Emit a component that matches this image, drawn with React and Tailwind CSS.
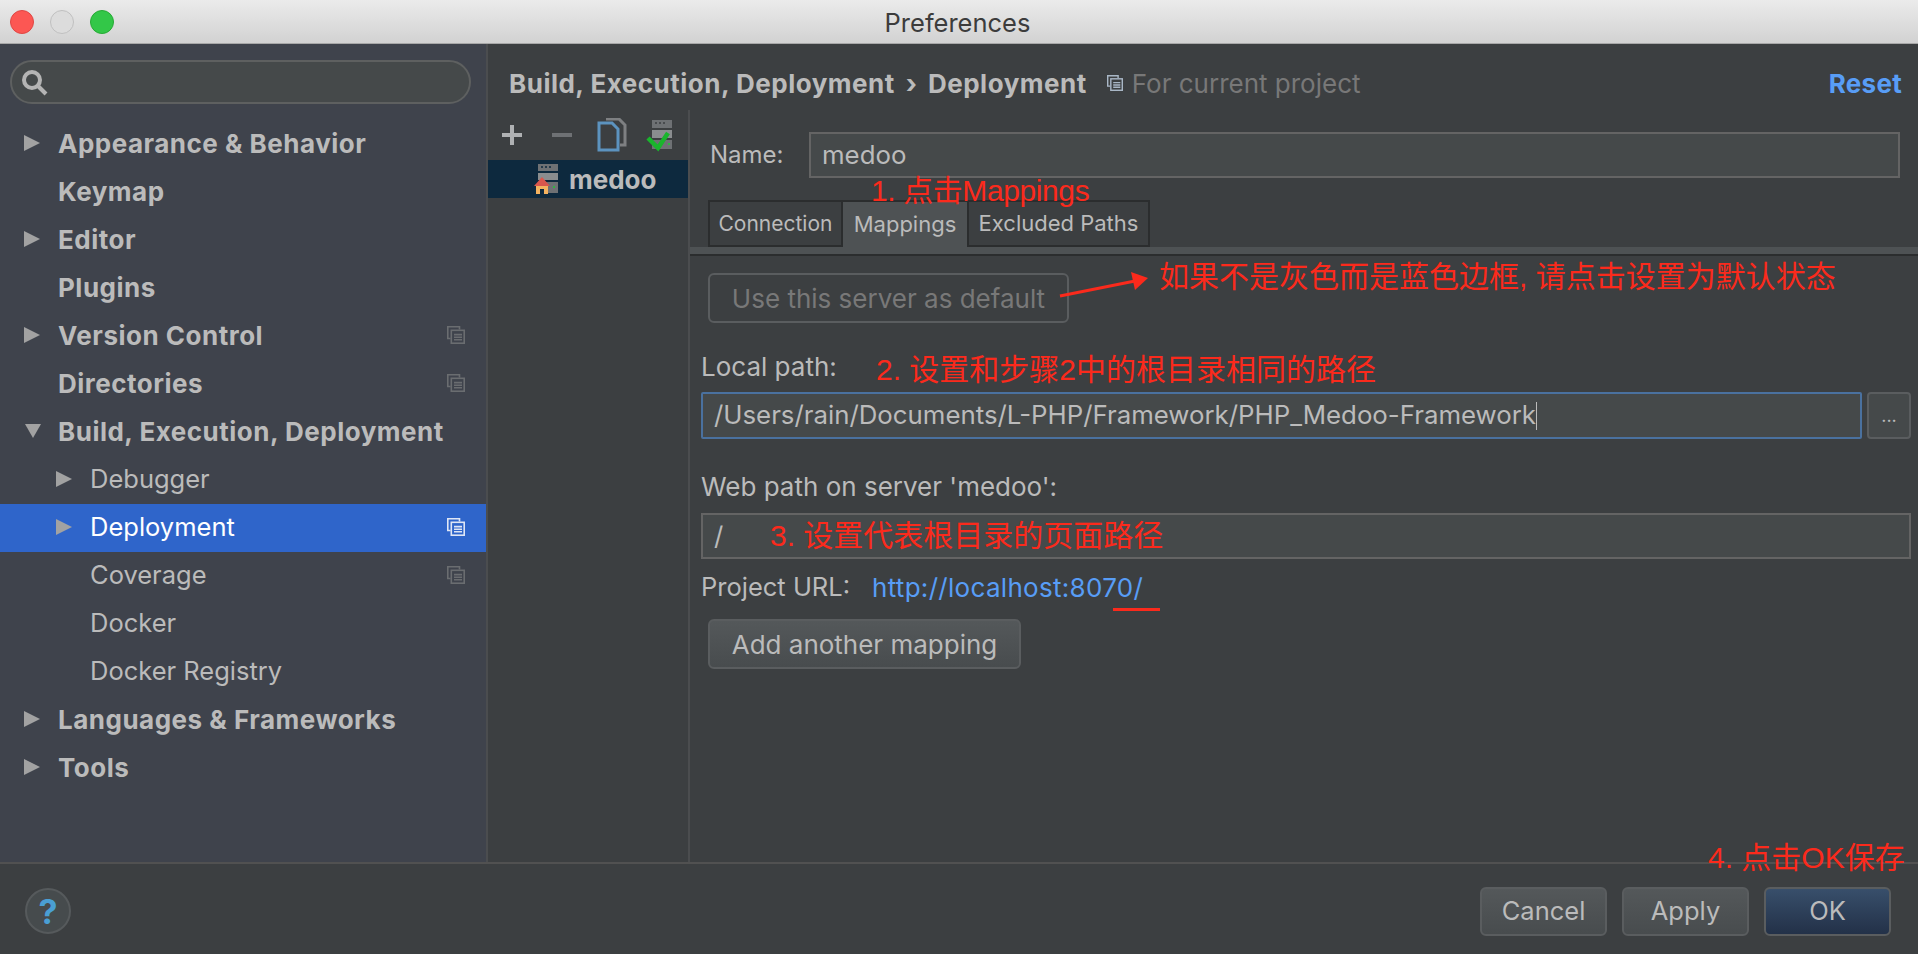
import React from "react";

const sidebarItems = [
  { label: "Appearance & Behavior", bold: true, arrow: "right" },
  { label: "Keymap", bold: true },
  { label: "Editor", bold: true, arrow: "right" },
  { label: "Plugins", bold: true },
  { label: "Version Control", bold: true, arrow: "right", copy: true },
  { label: "Directories", bold: true, copy: true },
  { label: "Build, Execution, Deployment", bold: true, arrow: "down" },
  { label: "Debugger", child: true, arrow: "right" },
  { label: "Deployment", child: true, arrow: "right", copy: true, selected: true },
  { label: "Coverage", child: true, copy: true },
  { label: "Docker", child: true },
  { label: "Docker Registry", child: true },
  { label: "Languages & Frameworks", bold: true, arrow: "right" },
  { label: "Tools", bold: true, arrow: "right" },
];

// the little "project level" overlapping squares
const ScopeIcon = ({ color = "#6a6d70", className = "", size = 18 }) => (
  <svg width={size} height={size} viewBox="0 0 18 18" fill="none" stroke={color} strokeWidth="1.6" className={className}>
    <path d="M12.5 3.5V0.8H0.8V12.5H3.5" />
    <rect x="4.3" y="4.3" width="12.9" height="12.9" />
    <path d="M7 8.6H15M7 11.2H15M7 13.8H15" />
  </svg>
);

const Arrow = ({ dir }) =>
  dir === "down" ? (
    <svg width="18" height="16" viewBox="0 0 18 16" className="shrink-0"><path d="M1 1H17L9 15Z" fill="#a2a2a2" /></svg>
  ) : (
    <svg width="16" height="18" viewBox="0 0 16 18" className="shrink-0"><path d="M0 1L16 9L0 17Z" fill="#a2a2a2" /></svg>
  );

const SidebarRow = ({ item }) => (
  <div className={`relative flex items-center h-12 pb-[2px] ${item.selected ? "bg-[#2f65ca] text-white" : "text-[#bbbbbb]"} ${item.bold ? "font-bold text-[26px] tracking-[0.5px]" : "text-[25.5px]"} ${item.child ? "pl-[56px]" : "pl-6"}`}>
    <div className="w-[34px] shrink-0">{item.arrow && <Arrow dir={item.arrow} />}</div>
    <span className="whitespace-nowrap">{item.label}</span>
    {item.copy && <ScopeIcon color={item.selected ? "#dfe6f5" : "#6a6d70"} className="ml-auto mr-[21px]" />}
  </div>
);

const Field = ({ children, className = "", border = "border-[#646464]" }) => (
  <div className={`flex items-center h-[46px] bg-[#45494a] border-2 ${border} pl-[11px] text-[25.8px] text-[#bbbbbb] ${className}`}>
    {children}
  </div>
);

const Tab = ({ children, active, className = "" }) => (
  <div className={`flex items-center justify-center h-[47px] text-[#bbbbbb] border-[#2b2d2e] border-t-2 ${active ? "bg-[#4e5254]" : "border-x-2 border-b-2"} ${className}`}>
    {children}
  </div>
);

const DialogButton = ({ children, primary }) => (
  <button className={`h-[49px] w-[127px] rounded-[6px] border-2 border-[#5a5d5f] text-[25.5px] text-[#bbbbbb] ${primary ? "bg-gradient-to-b from-[#384f6b] to-[#233148]" : "bg-gradient-to-b from-[#54585a] to-[#484c4e]"}`}>
    {children}
  </button>
);

const Note = ({ className, children }) => (
  <div className={`absolute whitespace-nowrap text-[#fb2a1c] text-[30px] leading-none font-['Liberation_Sans','Noto_Sans_CJK_SC',sans-serif] ${className}`}>{children}</div>
);

export default function App() {
  return (
    <div className="relative flex flex-col w-[1918px] h-[954px] overflow-hidden bg-[#3c3f41] font-['Inter','Noto_Sans_CJK_SC',sans-serif]">
      {/* title bar */}
      <div className="relative flex items-center justify-center h-[44px] pt-1 shrink-0 bg-gradient-to-b from-[#ebebeb] to-[#d2d2d2] border-b border-[#a8a8a8]">
        <div className="absolute left-[10px] top-[10px] flex gap-4">
          <div className="size-6 rounded-full bg-[#fc5753] border border-[#df4744]" />
          <div className="size-6 rounded-full bg-[#dcdcdc] border border-[#c0c0c0]" />
          <div className="size-6 rounded-full bg-[#33c748] border border-[#27aa35]" />
        </div>
        <span className="text-[25.5px] text-[#3c3c3c] mr-[3px]">Preferences</span>
      </div>

      <div className="flex flex-1 min-h-0">
        {/* settings tree */}
        <div className="w-[486px] shrink-0 bg-[#3f434c] border-r-2 border-[#4b4d4f] box-content">
          <div className="flex items-center h-[44px] ml-[10px] mr-[15px] mt-[16px] mb-[16px] rounded-full border-2 border-[#5e6060] bg-[#45494a] pl-2">
            <svg width="28" height="28" viewBox="0 0 28 28" fill="none" stroke="#b4b4b4" strokeWidth="4">
              <circle cx="12" cy="12" r="8" />
              <path d="M18 18L26 26" />
            </svg>
          </div>
          {sidebarItems.map((item) => (
            <SidebarRow key={item.label} item={item} />
          ))}
        </div>

        <div className="flex flex-col flex-1 min-w-0">
          {/* breadcrumb */}
          <div className="flex items-center h-[66px] pt-[12px] shrink-0 pl-[21px] pr-4 text-[26px]">
            <span className="font-bold tracking-[0.5px] text-[#bbbbbb] whitespace-nowrap">Build, Execution, Deployment</span>
            <span className="mx-[11px] font-bold text-[#bbbbbb]">›</span>
            <span className="font-bold tracking-[0.5px] text-[#bbbbbb]">Deployment</span>
            <ScopeIcon color="#a9b7c6" size={16} className="ml-5 mr-[9px]" />
            <span className="text-[#787878] whitespace-nowrap">For current project</span>
            <span className="ml-auto font-bold tracking-[0.3px] text-[#589df6]">Reset</span>
          </div>

          <div className="flex flex-1 min-h-0">
            {/* server list */}
            <div className="w-[200px] shrink-0 border-r-2 border-[#4b4d4f] box-content">
              <div className="flex items-center h-[50px] pl-[12px]">
                <svg width="24" height="24" viewBox="0 0 24 24" className="mr-[26px]"><path d="M12 2V22M2 12H22" stroke="#afb1b3" strokeWidth="4" /></svg>
                <svg width="24" height="24" viewBox="0 0 24 24" className="mr-[23px]"><path d="M2 12H22" stroke="#6e7174" strokeWidth="4" /></svg>
                <svg width="30" height="34" viewBox="0 0 30 34" fill="none" className="mr-[17px]">
                  <path d="M9 1H22L28 7V27H23" stroke="#7e8082" strokeWidth="3" />
                  <path d="M2 5H15L21 11V32H2Z" stroke="#5c93bf" strokeWidth="3" fill="#3c3f41" />
                </svg>
                <svg width="30" height="34" viewBox="0 0 30 34">
                  <rect x="8" y="2" width="20" height="8" fill="#6e7174" />
                  <rect x="8" y="12" width="20" height="8" fill="#8a8d8f" />
                  <rect x="8" y="22" width="20" height="9" fill="#6e7174" />
                  <path d="M11 5H13M15 5H17M19 5H21" stroke="#3c3f41" strokeWidth="1.5" />
                  <rect x="24" y="25" width="2" height="2" fill="#2fb344" />
                  <path d="M4 20L14 30L24 15" stroke="#19b52c" strokeWidth="4.5" fill="none" />
                </svg>
              </div>
              <div className="flex items-center h-[38px] bg-[#0d293e] pl-[46px]">
                <svg width="35" height="30" viewBox="0 0 35 30" className="shrink-0">
                  <rect x="4" y="0" width="20" height="7" fill="#6e7174" />
                  <rect x="4" y="9" width="20" height="7" fill="#8a8d8f" />
                  <rect x="4" y="18" width="20" height="11" fill="#6e7174" />
                  <path d="M7 3H9M11 3H13M15 3H17" stroke="#0d293e" strokeWidth="1.5" />
                  <path d="M0 22L8 13L16 22Z" fill="#d9574d" />
                  <rect x="2" y="22" width="12" height="8" fill="#f4b25f" />
                  <rect x="6" y="25" width="4" height="5" fill="#0d293e" />
                  <rect x="19" y="22" width="2" height="2" fill="#2fb344" />
                </svg>
                <span className="text-[26px] font-bold text-[#bbbbbb]">medoo</span>
              </div>
            </div>

            {/* mapping form */}
            <div className="flex-1 min-w-0 pt-[22px]">
              <div className="flex items-center pl-[20px] pr-[18px]">
                <span className="w-[99px] shrink-0 text-[24px] text-[#bbbbbb]">Name:</span>
                <Field className="flex-1">medoo</Field>
              </div>

              <div className="flex pl-[18px] mt-[22px]">
                <Tab className="w-[135px] text-[21px]">Connection</Tab>
                <Tab active className="w-[124px] text-[22px]">Mappings</Tab>
                <Tab className="w-[183px] text-[22px]">Excluded Paths</Tab>
              </div>
              <div className="h-[9px] bg-[#4e5254] border-b-2 border-[#2b2d2e]" />

              <div className="pl-[18px] pt-[17px]">
                <div className="flex items-center justify-center w-[361px] h-[50px] rounded-[6px] border-2 border-[#5a5d5f] text-[26px] text-[#787878]">
                  Use this server as default
                </div>
              </div>

              <div className="pl-[11px] pr-[7px]">
                <div className="mt-[30px] text-[26px] leading-[28px] text-[#bbbbbb]">Local path:</div>
                <div className="flex gap-[5px] mt-[11px]">
                  <Field className="flex-1 h-[47px] rounded-[2px]" border="border-[#4a719f]">
                    <span className="whitespace-nowrap">/Users/rain/Documents/L-PHP/Framework/PHP_Medoo-Framework</span>
                    <span className="w-px h-7 bg-[#bbbbbb]" />
                  </Field>
                  <div className="flex items-center justify-center w-[44px] h-[47px] rounded-[4px] border-2 border-[#5a5d5f] bg-[#45494a] text-[18px] text-[#bbbbbb]">...</div>
                </div>
                <div className="mt-[34px] text-[26px] leading-[28px] text-[#bbbbbb]">Web path on server 'medoo':</div>
                <Field className="mt-[12px]">/</Field>
                <div className="flex items-center mt-[14px] h-7 text-[25.5px]">
                  <span className="text-[#bbbbbb] w-[171px]">Project URL:</span>
                  <span className="text-[#589df6] text-[26px] tracking-[0.3px]">http://localhost:8070/</span>
                </div>
                <div className="pl-[7px] mt-[18px]">
                  <button className="w-[313px] h-[50px] rounded-[6px] border-2 border-[#5a5d5f] bg-gradient-to-b from-[#54585a] to-[#484c4e] text-[26px] text-[#bbbbbb]">
                    Add another mapping
                  </button>
                </div>
              </div>
            </div>
          </div>
        </div>
      </div>

      {/* footer */}
      <div className="flex items-center h-[92px] pt-1 shrink-0 border-t-2 border-[#515151] pl-[25px] pr-[27px]">
        <div className="flex items-center justify-center size-[46px] rounded-full border-2 border-[#565a5c] bg-[#464b4d] text-[34px] font-bold text-[#4a9fd4]">?</div>
        <div className="flex gap-[15px] ml-auto">
          <DialogButton>Cancel</DialogButton>
          <DialogButton>Apply</DialogButton>
          <DialogButton primary>OK</DialogButton>
        </div>
      </div>

      {/* red annotations drawn over the dialog */}
      <Note className="left-[871px] top-[176px] tracking-[-0.4px]">1. 点击Mappings</Note>
      <Note className="left-[1159px] top-[262px]">如果不是灰色而是蓝色边框, 请点击设置为默认状态</Note>
      <Note className="left-[876px] top-[355px]">2. 设置和步骤2中的根目录相同的路径</Note>
      <Note className="left-[770px] top-[521px]">3. 设置代表根目录的页面路径</Note>
      <Note className="left-[1708px] top-[843px]">4. 点击OK保存</Note>
      <svg className="absolute left-[1055px] top-[270px]" width="100" height="32" viewBox="0 0 100 32">
        <path d="M5 26L80 11" stroke="#fb2a1c" strokeWidth="3" />
        <path d="M93 8L76 2L80 20Z" fill="#fb2a1c" />
      </svg>
      <div className="absolute left-[1113px] top-[608px] w-[47px] h-[3px] bg-[#fb2a1c]" />
    </div>
  );
}
